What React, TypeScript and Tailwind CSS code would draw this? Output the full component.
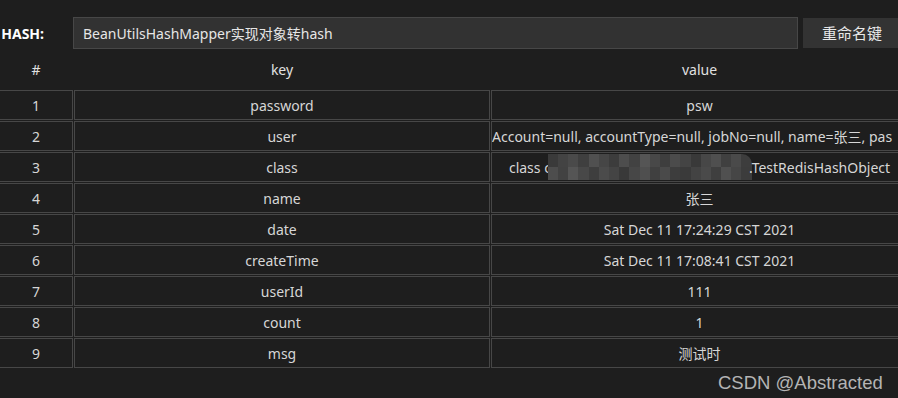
import React from "react";

const rows: { k: string; v: React.ReactNode; left?: boolean }[] = [
  { k: "password", v: "psw" },
  { k: "user", v: "Account=null, accountType=null, jobNo=null, name=张三, pas", left: true },
  { k: "class", v: "__CLASS__" },
  { k: "name", v: "张三" },
  { k: "date", v: "Sat Dec 11 17:24:29 CST 2021" },
  { k: "createTime", v: "Sat Dec 11 17:08:41 CST 2021" },
  { k: "userId", v: "111" },
  { k: "count", v: "1" },
  { k: "msg", v: "测试时" },
];

const mosaicShades = [
  "bg-[#3a3a3a]",
  "bg-[#434343]",
  "bg-[#4a4a4a]",
  "bg-[#3f3f3f]",
  "bg-[#505050]",
  "bg-[#464646]",
  "bg-[#3c3c3c]",
  "bg-[#4d4d4d]",
  "bg-[#424242]",
  "bg-[#555555]",
  "bg-[#484848]",
  "bg-[#3e3e3e]",
  "bg-[#4b4b4b]",
  "bg-[#444444]",
  "bg-[#393939]",
  "bg-[#474747]",
  "bg-[#4f4f4f]",
  "bg-[#404040]",
  "bg-[#4a4a4a]",
  "bg-[#3d3d3d]",
];

function Mosaic() {
  return (
    <div className="flex h-[26px] w-[204px] shrink-0 mx-[-3px] overflow-hidden rounded-tr-[10px]">
      {mosaicShades.map((c, i) => (
        <div key={i} className="flex flex-col w-[10.2px]">
          <div className={`h-[13px] ${c}`} />
          <div className={`h-[13px] ${mosaicShades[(i + 7) % mosaicShades.length]}`} />
        </div>
      ))}
    </div>
  );
}

const cell =
  "h-[30px] border border-[#474747] flex items-center justify-center overflow-hidden whitespace-nowrap";

export default function App() {
  return (
    <div
      className="relative w-[898px] h-[398px] overflow-hidden bg-[#1e1e1e] text-[#d6d6d6] text-[14px]"
      style={{ fontFamily: '"Noto Sans", "Noto Sans CJK SC", sans-serif' }}
    >
      <div className="pt-[17px] flex items-center">
        <div className="w-[44px] shrink-0 flex justify-end overflow-hidden whitespace-nowrap font-bold text-white text-[14px]">
          HASH:
        </div>
        <div className="ml-[29px] w-[725px] h-[32px] shrink-0 bg-[#323232] border border-[#474747] flex items-center pl-[9px] text-[#e6e6e6]">
          BeanUtilsHashMapper实现对象转hash
        </div>
        <div className="ml-[5px] w-[110px] h-[30px] shrink-0 bg-[#333333] flex items-center pl-[19px] text-[15px] text-[#e8e8e8]">
          重命名键
        </div>
      </div>

      <div className="-ml-px w-[909px] flex flex-col gap-px">
        <div className="grid grid-cols-[74px_416px_417px] gap-px h-[40px] items-center text-[#e0e0e0]">
          <div className="text-center">#</div>
          <div className="text-center">key</div>
          <div className="text-center">value</div>
        </div>
        {rows.map((r, i) => (
          <div key={i} className="grid grid-cols-[74px_416px_417px] gap-px">
            <div className={cell}>{i + 1}</div>
            <div className={cell}>{r.k}</div>
            {r.v === "__CLASS__" ? (
              <div className={cell}>
                <span>class c</span>
                <Mosaic />
                <span>.TestRedisHashObject</span>
              </div>
            ) : (
              <div className={`${cell} ${r.left ? "justify-start" : ""}`}>{r.v}</div>
            )}
          </div>
        ))}
      </div>

      <div
        className="absolute left-[718px] top-[369px] text-[18.5px] text-[#b4b4b4]"
        style={{ fontFamily: '"Liberation Sans", Arial, sans-serif' }}
      >
        CSDN @Abstracted
      </div>
    </div>
  );
}
